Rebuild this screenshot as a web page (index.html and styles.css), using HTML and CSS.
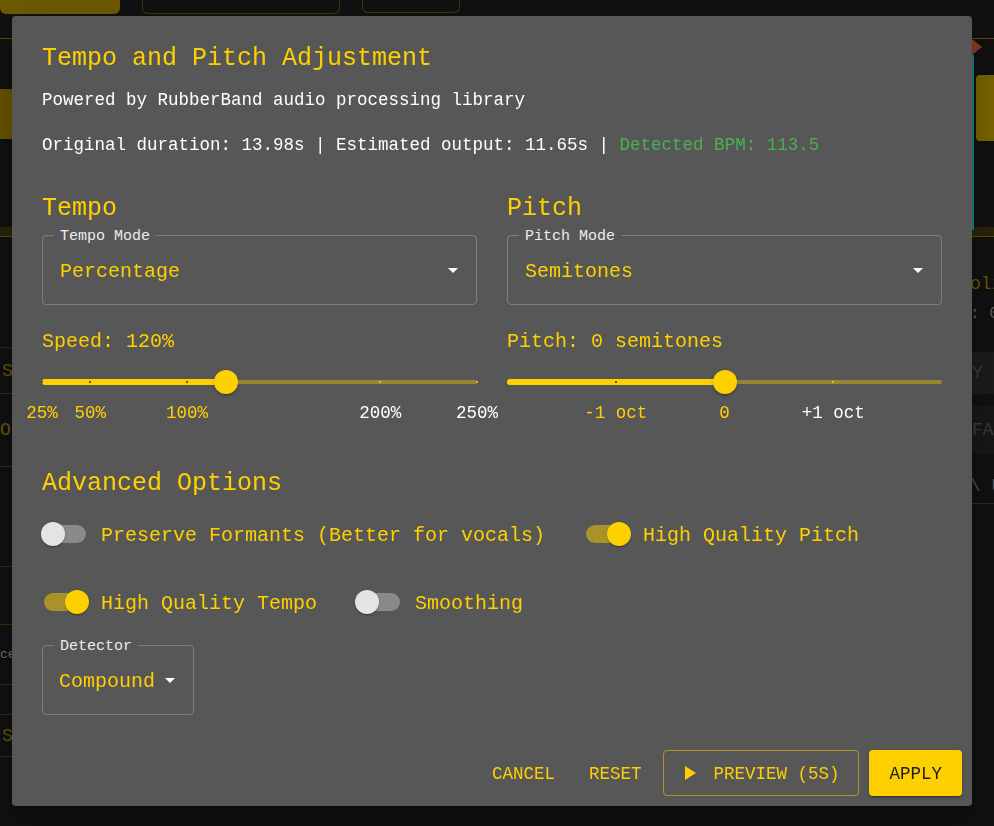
FILE: index.html
```html
<!DOCTYPE html>
<html lang="en">
<head>
<meta charset="utf-8">
<title>Tempo and Pitch Adjustment</title>
<link rel="stylesheet" href="styles.css">
</head>
<body>
<div class="app">
  <header class="topbar">
    <div class="tb-btn tb-primary"></div>
    <div class="tb-btn tb-outline tb-w1"></div>
    <div class="tb-btn tb-outline tb-w2"></div>
  </header>
  <main class="workspace">
    <section class="side-left">
      <div class="wave-area"><div class="blob"></div></div>
      <div class="band"></div>
      <div class="lrow lrow-a"></div>
      <div class="lrow lrow-text">S</div>
      <div class="lrow lrow-text2">OR</div>
      <div class="lrow lrow-b"></div>
      <div class="lrow lrow-c"></div>
      <div class="lrow lrow-small">ces</div>
      <div class="lrow lrow-d"></div>
      <div class="lrow lrow-text3">S</div>
    </section>
    <section class="side-right">
      <div class="r-wave">
        <div class="marker"><div class="diamond"></div><div class="playline"></div></div>
        <div class="r-blob"></div>
      </div>
      <div class="band r-band"></div>
      <div class="r-text r-t1">oli</div>
      <div class="r-text r-t2">: 0</div>
      <div class="r-box r-b1">Y C</div>
      <div class="r-box r-b2">FA</div>
      <div class="r-text r-t3">\ U</div>
    </section>
  </main>
</div>

<div class="overlay">
  <div class="dialog">
    <div class="content">
      <h2 class="title">Tempo and Pitch Adjustment</h2>
      <p class="subtitle">Powered by RubberBand audio processing library</p>
      <p class="info">Original duration: 13.98s | Estimated output: 11.65s | <span class="bpm">Detected BPM: 113.5</span></p>

      <div class="columns">
        <div class="col">
          <h3 class="col-title">Tempo</h3>
          <div class="select">
            <span class="select-label">Tempo Mode</span>
            <span class="select-value">Percentage</span>
            <span class="caret"></span>
          </div>
          <div class="slider-label">Speed: 120%</div>
          <div class="slider">
            <div class="rail"></div>
            <div class="track" style="width:42.22%"></div>
            <span class="mark on" style="left:0%"></span>
            <span class="mark on" style="left:11.11%"></span>
            <span class="mark on" style="left:33.33%"></span>
            <span class="mark" style="left:77.78%"></span>
            <span class="mark" style="left:100%"></span>
            <div class="thumb" style="left:42.22%"></div>
          </div>
          <div class="mark-labels">
            <span class="ml on" style="left:0%">25%</span>
            <span class="ml on" style="left:11.11%">50%</span>
            <span class="ml on" style="left:33.33%">100%</span>
            <span class="ml" style="left:77.78%">200%</span>
            <span class="ml" style="left:100%">250%</span>
          </div>
        </div>
        <div class="col">
          <h3 class="col-title">Pitch</h3>
          <div class="select">
            <span class="select-label">Pitch Mode</span>
            <span class="select-value">Semitones</span>
            <span class="caret"></span>
          </div>
          <div class="slider-label">Pitch: 0 semitones</div>
          <div class="slider">
            <div class="rail"></div>
            <div class="track" style="width:50%"></div>
            <span class="mark on" style="left:25%"></span>
            <span class="mark" style="left:75%"></span>
            <div class="thumb" style="left:50%"></div>
          </div>
          <div class="mark-labels">
            <span class="ml on" style="left:25%">-1 oct</span>
            <span class="ml on" style="left:50%">0</span>
            <span class="ml" style="left:75%">+1 oct</span>
          </div>
        </div>
      </div>

      <h3 class="section-title">Advanced Options</h3>
      <div class="switch-row">
        <label class="switch-item">
          <span class="switch"><span class="sw-track"></span><span class="sw-knob"></span></span>
          <span class="sw-label">Preserve Formants (Better for vocals)</span>
        </label>
        <label class="switch-item">
          <span class="switch is-on"><span class="sw-track"></span><span class="sw-knob"></span></span>
          <span class="sw-label">High Quality Pitch</span>
        </label>
      </div>
      <div class="switch-row row2">
        <label class="switch-item">
          <span class="switch is-on"><span class="sw-track"></span><span class="sw-knob"></span></span>
          <span class="sw-label">High Quality Tempo</span>
        </label>
        <label class="switch-item">
          <span class="switch"><span class="sw-track"></span><span class="sw-knob"></span></span>
          <span class="sw-label">Smoothing</span>
        </label>
      </div>
      <div class="select select-small">
        <span class="select-label">Detector</span>
        <span class="select-value">Compound</span>
        <span class="caret"></span>
      </div>
    </div>

    <div class="actions">
      <button class="btn btn-text">Cancel</button>
      <button class="btn btn-text">Reset</button>
      <button class="btn btn-outline">
        <svg class="play" width="11" height="14" viewBox="0 0 11 14"><polygon points="0,0 11,7 0,14" fill="#ffd000"/></svg>
        Preview (5s)
      </button>
      <button class="btn btn-contained">Apply</button>
    </div>
  </div>
</div>
</body>
</html>
```

FILE: styles.css
```css
* { box-sizing: border-box; }

html, body {
  margin: 0;
  width: 994px;
  height: 826px;
  overflow: hidden;
}

body {
  background: #111111;
  font-family: "Liberation Mono", "DejaVu Sans Mono", monospace;
  color: #fff;
}

/* ---------- dimmed application behind the dialog ---------- */
.app {
  height: 100%;
  display: flex;
  flex-direction: column;
}

.topbar {
  height: 39px;
  border-bottom: 1px solid #5c4c08;
  display: flex;
  align-items: flex-start;
  gap: 22px;
}

.tb-btn {
  height: 14px;
  border-radius: 0 0 6px 6px;
}

.tb-primary {
  width: 120px;
  background: #6f5b00;
}

.tb-outline {
  border: 1px solid #41370e;
  border-top: none;
}

.tb-w1 { width: 198px; }
.tb-w2 { width: 98px; height: 13px; }

.workspace {
  flex: 1;
  display: flex;
  justify-content: space-between;
}

.side-left {
  width: 200px;
  display: flex;
  flex-direction: column;
}

.wave-area {
  height: 188px;
  padding-top: 50px;
}

.blob {
  width: 40px;
  height: 50px;
  background: #6a5700;
  border-radius: 0 30px 6px 0;
}

.band {
  height: 10px;
  background: #2b2508;
  border-bottom: 1px solid #5c4c08;
}

.lrow {
  border-bottom: 1px solid #3a3208;
  color: #6a5700;
  font-size: 18px;
  display: flex;
  align-items: center;
  padding-left: 2px;
}

.lrow-a { height: 111px; border-bottom-color: #2a2a2a; }
.lrow-text { height: 46px; }
.lrow-text2 { height: 73px; padding-left: 0; }
.lrow-b { height: 100px; border-bottom-color: #2a2a2a; }
.lrow-c { height: 58px; }
.lrow-small { height: 60px; font-size: 13px; color: #777; padding-left: 0; }
.lrow-d { height: 30px; border-bottom-color: #2a2a2a; }
.lrow-text3 { height: 42px; }

.side-right {
  width: 200px;
  display: flex;
  flex-direction: column;
  align-items: stretch;
}

.r-wave {
  height: 188px;
  display: flex;
  justify-content: flex-end;
  position: relative;
}

.marker {
  position: absolute;
  right: 12px;
  top: 0;
  width: 10px;
  display: flex;
  flex-direction: column;
  align-items: flex-start;
}

.diamond {
  width: 0;
  height: 0;
  border-top: 8px solid transparent;
  border-bottom: 8px solid transparent;
  border-left: 10px solid #8a3a22;
}

.playline {
  width: 2px;
  height: 175px;
  background: #1c8585;
}

.r-blob {
  width: 18px;
  height: 66px;
  margin-top: 36px;
  background: #7c6600;
  border-radius: 4px 0 0 4px;
}

.r-band { height: 10px; }

.r-text {
  color: #6a5700;
  font-size: 18px;
  height: 30px;
  display: flex;
  align-items: center;
  white-space: nowrap;
  overflow: hidden;
  margin-left: 176px;
}

.r-t1 { margin-top: 32px; }
.r-t2 { color: #5e5e5e; font-size: 16px; }
.r-t3 { color: #505050; margin-top: 14px; border-bottom: 1px solid #2a2a2a; height: 36px; }

.r-box {
  height: 42px;
  background: #1c1c1c;
  color: #3c3c3c;
  font-size: 18px;
  display: flex;
  align-items: center;
  padding-left: 178px;
  white-space: nowrap;
  overflow: hidden;
}

.r-b1 { margin-top: 23px; }
.r-b2 { margin-top: 12px; height: 48px; background: #181818; }

/* ---------- dialog ---------- */
.overlay {
  position: fixed;
  inset: 0;
  display: flex;
  padding: 16px 22px 20px 12px;
}

.dialog {
  flex: 1;
  background: #575757;
  border-radius: 4px;
  box-shadow: 0 11px 15px -7px rgba(0,0,0,.2), 0 24px 38px 3px rgba(0,0,0,.14), 0 9px 46px 8px rgba(0,0,0,.12);
  display: flex;
  flex-direction: column;
}

.content {
  padding: 0 30px;
}

.title {
  margin: 27px 0 0;
  font-size: 25px;
  line-height: 32px;
  font-weight: 400;
  color: #ffd000;
}

.subtitle {
  margin: 13px 0 0;
  font-size: 17.5px;
  line-height: 24px;
  color: #fff;
}

.info {
  margin: 21px 0 0;
  font-size: 17.5px;
  line-height: 24px;
  color: #fff;
}

.bpm { color: #4caf50; }

.columns {
  margin-top: 36px;
  display: grid;
  grid-template-columns: 1fr 1fr;
  column-gap: 30px;
}

.col-title, .section-title {
  margin: 0;
  font-size: 25px;
  line-height: 32px;
  font-weight: 400;
  color: #ffd000;
}

.select {
  margin-top: 10px;
  position: relative;
  height: 70px;
  border: 1px solid rgba(255,255,255,0.23);
  border-radius: 4px;
  display: flex;
  align-items: center;
  padding: 0 18px 0 17px;
}

.select-label {
  position: absolute;
  top: -9px;
  left: 11px;
  padding: 0 6px;
  background: #575757;
  font-size: 15px;
  line-height: 20px;
  color: #ececec;
}

.select-value {
  flex: 1;
  font-size: 20px;
  line-height: 28px;
  padding-top: 4px;
  color: #ffd000;
}

.caret {
  width: 0;
  height: 0;
  border-left: 5.5px solid transparent;
  border-right: 5.5px solid transparent;
  border-top: 5.5px solid #fff;
}

.slider-label {
  margin-top: 23px;
  font-size: 20px;
  line-height: 28px;
  color: #ffd000;
}

.slider {
  margin-top: 11px;
  position: relative;
  height: 30px;
}

.rail {
  position: absolute;
  left: 0;
  right: 0;
  top: 13px;
  height: 4px;
  border-radius: 2px;
  background: rgba(255,208,0,0.4);
}

.track {
  position: absolute;
  left: 0;
  top: 12px;
  height: 6px;
  border-radius: 3px;
  background: #ffd000;
}

.mark {
  position: absolute;
  top: 14px;
  width: 2px;
  height: 2px;
  margin-left: -1px;
  background: #e8c000;
}

.mark.on { background: #6a5a10; }

.thumb {
  position: absolute;
  top: 3px;
  width: 24px;
  height: 24px;
  margin-left: -12px;
  border-radius: 50%;
  background: #ffd000;
  box-shadow: 0 3px 1px -2px rgba(0,0,0,.2), 0 2px 2px 0 rgba(0,0,0,.14), 0 1px 5px 0 rgba(0,0,0,.12);
}

.mark-labels {
  position: relative;
  height: 24px;
  margin-top: 4px;
}

.ml {
  position: absolute;
  top: 0;
  transform: translateX(-50%);
  font-size: 17.5px;
  line-height: 24px;
  color: #fff;
  white-space: nowrap;
}

.ml.on { color: #ffd000; }

.section-title { margin-top: 43px; }

.switch-row {
  margin-top: 14px;
  height: 40px;
  display: flex;
  align-items: center;
  gap: 41px;
  padding-left: 2px;
}

.switch-row.row2 { margin-top: 28px; }

.switch-item {
  display: flex;
  align-items: center;
}

.switch {
  position: relative;
  width: 42px;
  height: 18px;
  margin-right: 15px;
}

.sw-track {
  display: block;
  width: 100%;
  height: 100%;
  border-radius: 9px;
  background: #8a8a8a;
}

.sw-knob {
  position: absolute;
  top: -3px;
  left: -3px;
  width: 24px;
  height: 24px;
  border-radius: 50%;
  background: #e4e4e4;
  box-shadow: 0 2px 1px -1px rgba(0,0,0,.2), 0 1px 1px 0 rgba(0,0,0,.14), 0 1px 3px 0 rgba(0,0,0,.12);
}

.switch.is-on .sw-track { background: #aa922b; }
.switch.is-on .sw-knob { left: auto; right: -3px; background: #ffd000; }

.sw-label {
  font-size: 20px;
  line-height: 28px;
  padding-top: 4px;
  color: #ffd000;
  white-space: nowrap;
}

.select-small {
  width: 152px;
  margin-top: 23px;
  padding-left: 16px;
}

.actions {
  margin-top: auto;
  display: flex;
  justify-content: flex-end;
  gap: 10px;
  padding: 10px;
}

.btn {
  height: 46px;
  display: flex;
  align-items: center;
  border-radius: 4px;
  border: none;
  background: none;
  font-family: inherit;
  font-size: 17.5px;
  text-transform: uppercase;
  color: #ffd000;
  padding: 2px 12px 0;
  cursor: pointer;
}

.btn-outline {
  border: 1px solid rgba(255,208,0,0.5);
  padding: 2px 19px 0 21px;
}

.play { margin-right: 17px; margin-top: -2px; }

.btn-contained {
  background: #ffd000;
  color: #1c1c1c;
  padding: 2px 20px 0;
  box-shadow: 0 3px 1px -2px rgba(0,0,0,.2), 0 2px 2px 0 rgba(0,0,0,.14), 0 1px 5px 0 rgba(0,0,0,.12);
}
```
